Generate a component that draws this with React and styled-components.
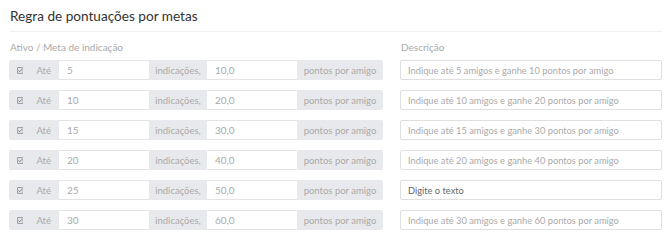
import React from 'react'
import styled, { createGlobalStyle } from 'styled-components'

const GlobalStyle = createGlobalStyle`
  body {
    margin: 0;
    background: #fff;
    font-family: Lato, "Open Sans", sans-serif;
  }
`

const rows = [
  { meta: '5', pontos: '10,0', desc: 'Indique até 5 amigos e ganhe 10 pontos por amigo' },
  { meta: '10', pontos: '20,0', desc: 'Indique até 10 amigos e ganhe 20 pontos por amigo' },
  { meta: '15', pontos: '30,0', desc: 'Indique até 15 amigos e ganhe 30 pontos por amigo' },
  { meta: '20', pontos: '40,0', desc: 'Indique até 20 amigos e ganhe 40 pontos por amigo' },
  { meta: '25', pontos: '50,0', desc: '' },
  { meta: '30', pontos: '60,0', desc: 'Indique até 30 amigos e ganhe 60 pontos por amigo' },
]

const Page = styled.div`
  width: 670px;
  padding: 0 8px 0 9px;
  box-sizing: border-box;
`

const Header = styled.div`
  height: 32px;
  margin-left: 1px;
  border-bottom: 1px solid #f0f0f0;
  display: flex;
  align-items: center;
  box-sizing: border-box;
  padding-top: 1px;
`

const Title = styled.h2`
  margin: 0;
  font-size: 13.6px;
  font-weight: 400;
  color: #333;
`

const Grid = styled.div`
  display: grid;
  grid-template-columns: 374px 262px;
  column-gap: 17px;
  row-gap: 10px;
`

const ColLabel = styled.div`
  font-size: 10px;
  line-height: 14px;
  color: #aaa;
  padding: 8px 0 0 1px;
  margin-bottom: -4px;
`

const Group = styled.div`
  display: flex;
  height: 20px;
`

const Addon = styled.div`
  width: ${p => p.w}px;
  flex: none;
  display: flex;
  align-items: center;
  justify-content: ${p => (p.center ? 'center' : 'flex-start')};
  gap: 13px;
  padding: 0 ${p => (p.center ? 0 : 8)}px;
  box-sizing: border-box;
  background: #e8e9ec;
  border-radius: ${p => p.radius};
  font-size: 9.5px;
  color: #aaa;
  white-space: nowrap;
`

const Field = styled.div`
  width: ${p => p.w}px;
  flex: none;
  box-sizing: border-box;
  background: #fff;
  border: 1px solid #e4e4e4;
  border-left: none;
  border-right: none;
  display: flex;
  align-items: center;
  padding: 0 8px;
  font-size: 10px;
  color: #aaa;
`

const Desc = styled.div`
  height: 20px;
  box-sizing: border-box;
  border: 1px solid #e0e0e0;
  border-radius: 2px;
  display: flex;
  align-items: center;
  padding: 0 7px;
  font-size: 9.3px;
  color: ${p => (p.placeholder ? '#666' : '#aaa')};
`

const Check = () => (
  <svg width="9" height="9" viewBox="0 0 9 9">
    <rect x="0.5" y="0.5" width="8" height="8" rx="0.5" fill="none" stroke="#777" />
    <path d="M2 4.5 L3.8 6.1 L7 2.8" fill="none" stroke="#555" strokeWidth="1.1" />
  </svg>
)

const App = () => (
  <Page>
    <GlobalStyle />
    <Header>
      <Title>Regra de pontuações por metas</Title>
    </Header>
    <Grid>
      <ColLabel>Ativo / Meta de indicação</ColLabel>
      <ColLabel>Descrição</ColLabel>
      {rows.map(r => (
        <React.Fragment key={r.meta}>
          <Group>
            <Addon w={50} radius="2px 0 0 2px">
              <Check />
              <span>Até</span>
            </Addon>
            <Field w={90}>{r.meta}</Field>
            <Addon w={58} center radius="0">indicações,</Addon>
            <Field w={90}>{r.pontos}</Field>
            <Addon w={86} center radius="0 2px 2px 0">pontos por amigo</Addon>
          </Group>
          <Desc placeholder={!r.desc ? 1 : 0}>{r.desc || 'Digite o texto'}</Desc>
        </React.Fragment>
      ))}
    </Grid>
  </Page>
)

export default App
